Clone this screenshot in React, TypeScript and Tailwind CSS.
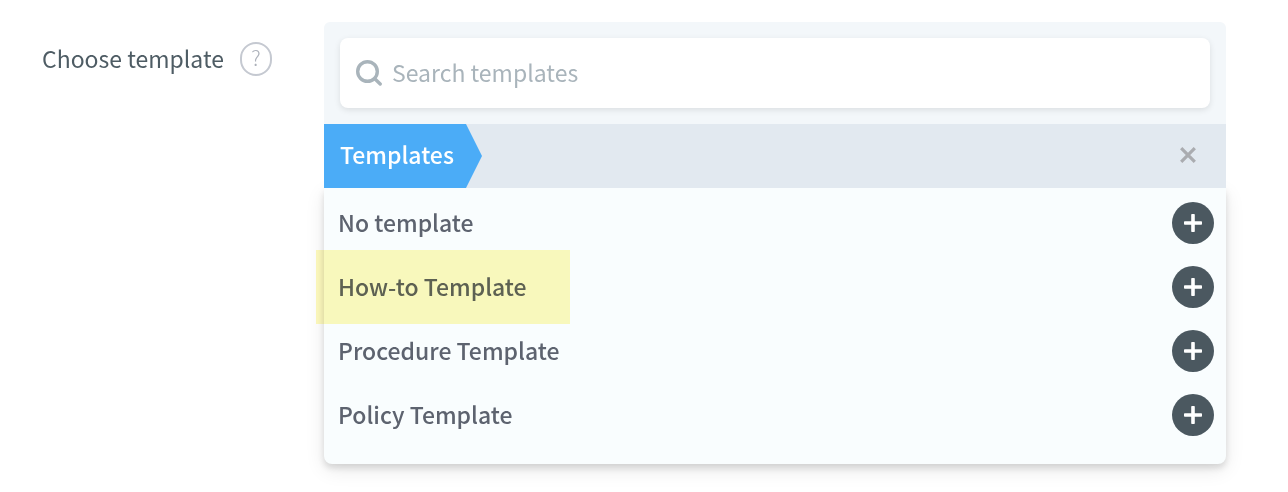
import React, { useState } from "react";

const templates = [
  { name: "No template", highlighted: false },
  { name: "How-to Template", highlighted: true },
  { name: "Procedure Template", highlighted: false },
  { name: "Policy Template", highlighted: false },
];

function SearchIcon() {
  return (
    <svg aria-hidden="true" viewBox="0 0 26 26" className="size-[26px] shrink-0" fill="none" stroke="#a9b4bb">
      <circle cx="11.5" cy="11.5" r="9.8" strokeWidth="3.4" />
      <path d="M18.8 18.8l5.4 5.2" strokeWidth="3.4" strokeLinecap="round" />
    </svg>
  );
}

function PlusIcon() {
  return (
    <svg aria-hidden="true" viewBox="0 0 18 18" className="size-[18px]" fill="white">
      <rect x="7.2" y="0" width="3.6" height="18" rx="0.8" />
      <rect x="0" y="7.2" width="18" height="3.6" rx="0.8" />
    </svg>
  );
}

function CloseIcon() {
  return (
    <svg aria-hidden="true" viewBox="0 0 16 16" className="size-4" fill="none" stroke="#aaacb0" strokeWidth="3.2">
      <path d="M1.2 1.2l13.6 13.6M14.8 1.2L1.2 14.8" />
    </svg>
  );
}

export default function App() {
  const [query, setQuery] = useState("");

  return (
    <main className="flex min-h-screen items-start bg-white py-[22px] pr-[62px] pl-[42px] font-['Noto_Sans_CJK_SC',sans-serif] text-[23px]">
      <div className="flex w-[282px] shrink-0 items-center pt-5">
        <label htmlFor="template-search" className="min-w-[186px] pb-[2px] leading-8 whitespace-nowrap text-[#4e5c64]">
          Choose template
        </label>
        <button
          type="button"
          aria-label="Help"
          className="ml-3 flex h-[34px] w-8 shrink-0 items-center justify-center rounded-full border-2 border-[#c5c9d1] pb-1 text-[21px] leading-7 font-light text-[#acb1ba]"
        >
          ?
        </button>
      </div>

      <section className="min-w-0 flex-1">
        <div className="relative rounded-t-md bg-[#f3f7fa]">
          <div className="p-4">
            <div className="flex h-[70px] items-center gap-[10px] rounded-lg bg-white px-4 shadow-[0_2px_6px_rgba(0,0,0,0.1)]">
              <SearchIcon />
              <input
                id="template-search"
                type="text"
                value={query}
                onChange={(event) => setQuery(event.target.value)}
                placeholder="Search templates"
                className="h-9 min-w-0 flex-1 bg-transparent pb-[2px] text-[#4e5c64] outline-none placeholder:text-[#a9b4bb]"
              />
            </div>
          </div>
          <div className="flex h-16 items-center justify-between bg-[#e2e9f0] pr-[30px]">
            <button
              type="button"
              className="h-16 w-[158px] bg-[#4bacf7] pb-1 pl-4 text-left font-medium text-white [clip-path:polygon(0_0,142px_0,100%_50%,142px_100%,0_100%)]"
            >
              Templates
            </button>
            <button type="button" aria-label="Close" className="pb-[2px]">
              <CloseIcon />
            </button>
          </div>
        </div>

        <ul className="rounded-b-lg bg-[#f9fdfe] pt-[3px] pb-[17px] shadow-[0_4px_6px_rgba(0,0,0,0.12),0_6px_20px_rgba(0,0,0,0.09)]">
          {templates.map((template) => (
            <li key={template.name} className="relative flex h-16 items-center justify-between pr-3 pl-[14px]">
              <span className="pb-[2px] font-medium text-[#5d636f]">{template.name}</span>
              <button
                type="button"
                aria-label={`Add ${template.name}`}
                className="flex size-[42px] items-center justify-center rounded-full bg-[#4b5860]"
              >
                <PlusIcon />
              </button>
              {template.highlighted && (
                <span className="pointer-events-none absolute -inset-y-[5px] -left-2 w-[254px] bg-[#fefabd] mix-blend-multiply" />
              )}
            </li>
          ))}
        </ul>
      </section>
    </main>
  );
}
